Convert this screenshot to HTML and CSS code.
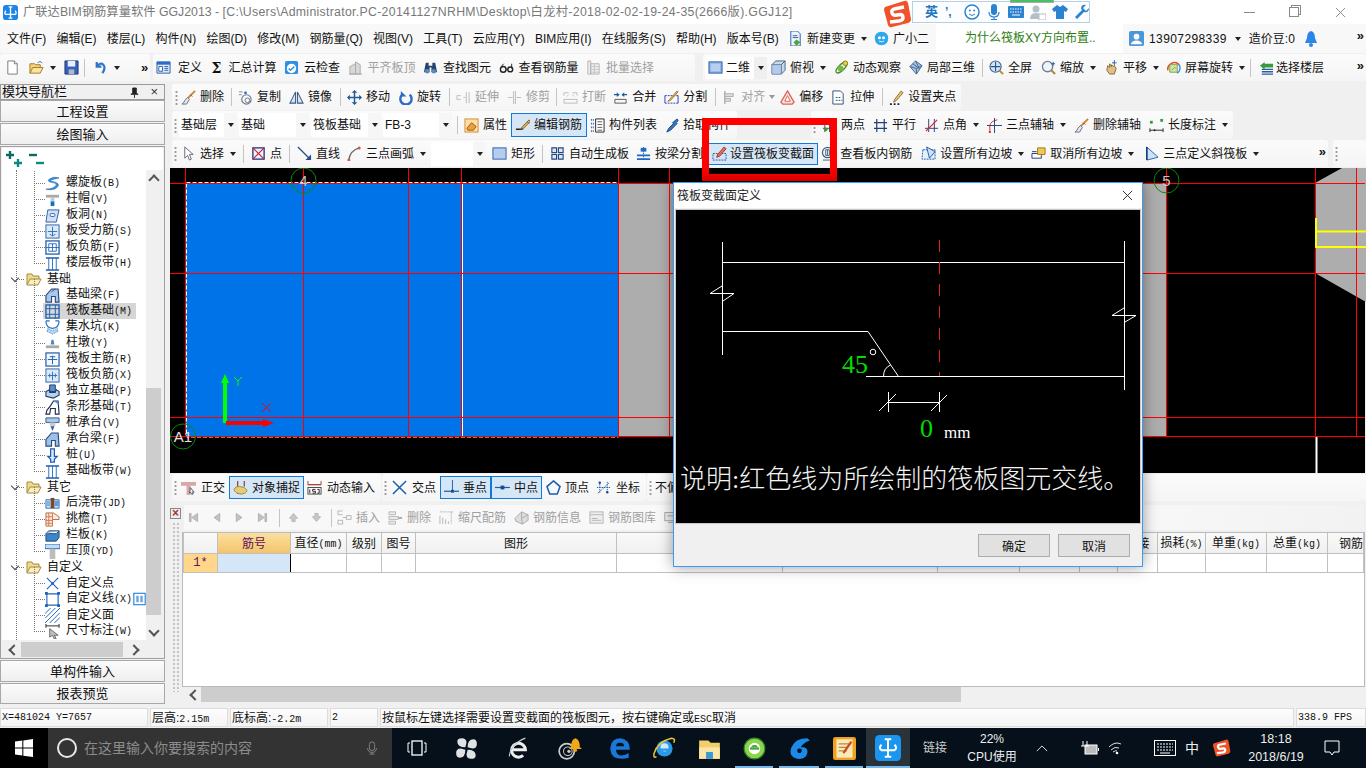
FILE: index.html
```html
<!DOCTYPE html>
<html lang="zh-CN">
<head>
<meta charset="utf-8">
<title>广联达BIM钢筋算量软件 GGJ2013</title>
<link rel="stylesheet" href="styles.css">
</head>
<body>
<svg class="defs" aria-hidden="true">
<!-- file toolbar -->
<symbol id="new" viewBox="0 0 16 16"><path d="M3 1h7l3 3v11H3z" fill="#fff" stroke="#777"/><path d="M10 1v3h3" fill="#eee" stroke="#777"/></symbol>
<symbol id="open" viewBox="0 0 16 16"><path d="M1 14V4h5l1 1h5v3" fill="#f3d27a" stroke="#a07a20"/><path d="M1 14l3-6h11l-3 6z" fill="#f8e3a0" stroke="#a07a20"/><path d="M9 3q3-3 5 0" fill="none" stroke="#3a78c8"/></symbol>
<symbol id="save" viewBox="0 0 16 16"><path d="M1 1h14v14H1z" fill="#3a5fb8" stroke="#1f3578"/><path d="M4 1h8v6H4z" fill="#e8eefc"/><path d="M5 10h6v5H5z" fill="#aeb8cc"/></symbol>
<symbol id="undo" viewBox="0 0 16 16"><path d="M4 2v5h5M4 7q4-5 7-2t-1 9" fill="none" stroke="#2f78c8" stroke-width="2.4"/></symbol>
<symbol id="def" viewBox="0 0 16 16"><path d="M1 2h14v12H1z" fill="#dfeafa" stroke="#2a5ea8"/><path d="M1 2h14v3H1z" fill="#2a6ec0"/><path d="M3 7h4v5H3zM9 7h4M9 9h4M9 11h4" fill="#fff" stroke="#2a5ea8"/></symbol>
<symbol id="cloud" viewBox="0 0 16 16"><rect x="1" y="1" width="14" height="14" rx="2" fill="#2e90e0"/><circle cx="8" cy="9" r="5" fill="#fff"/><path d="M5 9l2 2 4-4" fill="none" stroke="#2e90e0" stroke-width="1.6"/></symbol>
<symbol id="level" viewBox="0 0 16 16"><path d="M2 15V7l6-3v11zM8 15V2l5 3v10z" fill="#d8d8d8" stroke="#aaa"/><path d="M1 15h14" stroke="#aaa"/></symbol>
<symbol id="find" viewBox="0 0 16 16"><path d="M3 3h3v3h4V3h3l2 10H9V8H7v5H1z" fill="#24446e"/><circle cx="4.5" cy="12" r="2.4" fill="#5a8ac0"/><circle cx="11.5" cy="12" r="2.4" fill="#5a8ac0"/></symbol>
<symbol id="glass" viewBox="0 0 16 16"><circle cx="4.5" cy="10" r="3" fill="none" stroke="#222" stroke-width="1.5"/><circle cx="12" cy="10" r="2.6" fill="none" stroke="#222" stroke-width="1.5"/><path d="M3 8q0-3 2-4M13.500 9V4M7.500 10h2" stroke="#222" fill="none"/></symbol>
<symbol id="batch" viewBox="0 0 16 16"><path d="M2 1h3v14H2zM5 4h9v11H5z" fill="#eee" stroke="#b4b4b4"/><path d="M5 7h9M5 10h9M5 13h9M9 4v11" stroke="#c4c4c4"/></symbol>
<symbol id="d2" viewBox="0 0 16 16"><rect x="1" y="2" width="14" height="12" fill="#8fb2e4" stroke="#2a5ea8"/><rect x="3" y="4" width="10" height="8" fill="#b8d0f0"/></symbol>
<symbol id="top" viewBox="0 0 16 16"><path d="M1 5l4-4h10v10l-4 4H1z" fill="#c8d8ec" stroke="#47607e"/><path d="M1 5h10v10M11 5l4-4" fill="none" stroke="#47607e"/><path d="M1 5h10v10H1z" fill="#a8c6ea" opacity=".7"/></symbol>
<symbol id="orbit" viewBox="0 0 16 16"><ellipse cx="8" cy="8" rx="7.500" ry="3" transform="rotate(-45 8 8)" fill="none" stroke="#3f8c2f" stroke-width="1.400"/><circle cx="12" cy="3.500" r="2.500" fill="#e8d23a" stroke="#8a7a10"/><circle cx="7" cy="9" r="3.200" fill="#74b83e"/></symbol>
<symbol id="local" viewBox="0 0 16 16"><path d="M2 7l6-6 7 5-6 9z" fill="#a4c2e6" stroke="#46658a"/><path d="M5 4l7 5M8 1l4 8M2 7l7 2 6-3M9 9v6" stroke="#46658a" fill="none"/></symbol>
<symbol id="full" viewBox="0 0 16 16"><circle cx="7" cy="7" r="6" fill="#d3e4f6" stroke="#45638c" stroke-width="1.200"/><path d="M7 2v10M2 7h10" stroke="#24558f" stroke-width="1.200"/><path d="M11 11l4 4" stroke="#b08a40" stroke-width="2"/></symbol>
<symbol id="zoom" viewBox="0 0 16 16"><circle cx="7" cy="7" r="5.500" fill="#eef4fa" stroke="#6d7f92" stroke-width="1.400"/><path d="M11 11l4 4" stroke="#b08a40" stroke-width="2.200"/><path d="M13 2v4M11 4h4" stroke="#1f5ea8"/></symbol>
<symbol id="pan" viewBox="0 0 16 16"><path d="M3 11l1-5 2 2V4l2 3V5l2 2 1-1 2 3-2 6H6z" fill="#dcc08a" stroke="#8a6a30"/><path d="M11 0v6M8.500 3h5" stroke="#2a5ea8"/></symbol>
<symbol id="spin" viewBox="0 0 16 16"><path d="M2 11A7 7 0 0 1 14 5" fill="none" stroke="#e04a2a" stroke-width="1.600"/><path d="M14 5a7 7 0 0 1-2 9" fill="none" stroke="#2e90e0" stroke-width="1.600"/><path d="M4 5h8v8H4z" fill="#cde8b0" stroke="#78a040"/><path d="M6 11l3-3 2 1" stroke="#d08a20" fill="none"/></symbol>
<symbol id="floor" viewBox="0 0 16 16"><path d="M1 6l5-4v2h9v4H6v2z" fill="#3b9a3b"/><path d="M3 10h12M3 12.500h12M3 15h12" stroke="#2a5ea8" stroke-width="1.400"/></symbol>
<!-- modify toolbar -->
<symbol id="brush" viewBox="0 0 16 16"><path d="M15 1L7 9" stroke="#c88a30" stroke-width="2"/><path d="M7 8l2 2-3 5H1q3-2 3-4z" fill="#dfe4ee" stroke="#6a6f88"/><path d="M10 5l2 2" stroke="#d22"/></symbol>
<symbol id="copy" viewBox="0 0 16 16"><circle cx="9" cy="10" r="5" fill="none" stroke="#6a7788" stroke-width="1.200"/><circle cx="10" cy="11" r="2.500" fill="none" stroke="#6a7788"/><path d="M1 2h4M1 5h3" stroke="#888"/><circle cx="8" cy="3" r="1.500" fill="#2a6ec0"/></symbol>
<symbol id="mirror" viewBox="0 0 16 16"><path d="M7 2v12H1zM9 2v12h6z" fill="#d7e4f4" stroke="#3b5a84" stroke-width="1.100"/></symbol>
<symbol id="move" viewBox="0 0 16 16"><path d="M8 1v14M1 8h14" stroke="#245a94" stroke-width="1.600"/><path d="M8 0l3 3H5zM8 16l3-3H5zM0 8l3-3v6zM16 8l-3-3v6z" fill="#245a94"/></symbol>
<symbol id="rot" viewBox="0 0 16 16"><path d="M12.500 5a6 6 0 1 1-8 0" fill="none" stroke="#2b6cc4" stroke-width="2.600"/><path d="M3 1v6h6" fill="#2b6cc4"/></symbol>
<symbol id="extend" viewBox="0 0 16 16"><path d="M1 6h4M1 10h4M1 6v4M8 8h2M14 2v12M11 2v12" stroke="#bbb" fill="none"/></symbol>
<symbol id="trim" viewBox="0 0 16 16"><path d="M1 8h5M10 8h5M7 1v14M9 1v14" stroke="#bbb" fill="none"/></symbol>
<symbol id="break" viewBox="0 0 16 16"><path d="M1 3h5M10 3h5M1 3v3M15 3v3M1 10h14v4H1z" stroke="#bbb" fill="none"/><path d="M4 7l2-2M12 7l-2-2" stroke="#bbb"/></symbol>
<symbol id="merge" viewBox="0 0 16 16"><path d="M2 10h12v4H2z" fill="none" stroke="#555"/><path d="M1 5h5M15 5h-5" stroke="#1a5ea8" stroke-width="1.400"/><path d="M7 5L4 2.500v5zM9 5l3-2.500v5z" fill="#1a5ea8"/></symbol>
<symbol id="split" viewBox="0 0 16 16"><path d="M1 6h14M1 14h14" stroke="#2040c8" stroke-dasharray="2 1"/><path d="M1 6v8M15 6v8" stroke="#2040c8"/><path d="M14 1L6 10l-2 2 3-1 8-9z" fill="#e8c870" stroke="#a07020"/></symbol>
<symbol id="align" viewBox="0 0 16 16"><path d="M3 1v14" stroke="#aaa" stroke-width="1.400"/><path d="M3 4h9v3H3zM3 9h6v3H3z" fill="#ddd" stroke="#aaa"/></symbol>
<symbol id="offset" viewBox="0 0 16 16"><path d="M8 1l7 12-2 2H3l-2-2z" fill="#fbe0dd" stroke="#d8645a" stroke-width="1.400"/><path d="M8 6l3 6H5z" fill="#fff" stroke="#d8645a"/></symbol>
<symbol id="stretch" viewBox="0 0 16 16"><path d="M2 1h8l3 3v11H2z" fill="#fff" stroke="#2c4c78"/><path d="M5 8h5M5 11h7" stroke="#2c4c78" stroke-dasharray="2 1"/></symbol>
<symbol id="grip2" viewBox="0 0 16 16"><path d="M13 1L6 10l-1 3 3-2 7-8z" fill="#e8c870" stroke="#8a6a30"/><path d="M1 15h2M5 15h2M9 15h2" stroke="#222" stroke-width="2"/></symbol>
<!-- element toolbar -->
<symbol id="prop" viewBox="0 0 16 16"><rect x="1" y="1" width="14" height="14" fill="#fce0a8" stroke="#d88a30"/><path d="M3 11l5-6 5 4-3 4H4z" fill="#e8a040" stroke="#a05a10"/></symbol>
<symbol id="edit" viewBox="0 0 16 16"><path d="M1 12h6l2-1" fill="none" stroke="#222" stroke-width="1.400"/><path d="M15 2L8 9l-2 3 3-1 7-7z" fill="#e8b850" stroke="#8a5a20"/><path d="M13 4l2 2" stroke="#d33"/></symbol>
<symbol id="list" viewBox="0 0 16 16"><path d="M1 2h3M1 6h3M1 10h3M1 14h3" stroke="#2a5ea8" stroke-width="2" stroke-dasharray="1 1"/><path d="M6 1h9v14H6z" fill="#fff" stroke="#222"/><path d="M8 4h5M8 7h5M8 10h5M8 13h5" stroke="#555"/></symbol>
<symbol id="pick" viewBox="0 0 16 16"><path d="M14 1l1 2-2 2 1 1-2 2-5 5-4 2 2-4 5-5-1-1z" fill="#3678c0" stroke="#1e4a80"/></symbol>
<symbol id="twopt" viewBox="0 0 16 16"><path d="M3 1v14M8 1v14M13 1v14M1 11h14" stroke="#445" /><circle cx="4" cy="12" r="2" fill="#3c9a3c"/></symbol>
<symbol id="para" viewBox="0 0 16 16"><path d="M4 1v14M12 1v14M1 5h14M1 11h14" stroke="#22407a" stroke-width="1.300"/></symbol>
<symbol id="ang" viewBox="0 0 16 16"><path d="M5 1v14M11 1v14" stroke="#22407a"/><path d="M1 11h14" stroke="#22407a"/><path d="M2 14L14 2" stroke="#e0222a" stroke-width="1.400"/></symbol>
<symbol id="arc3" viewBox="0 0 16 16"><path d="M3 15V8q1-5 8-6" fill="none" stroke="#d23"/><path d="M0 8h16M8 0v16" stroke="#22407a"/><circle cx="3" cy="15" r="1.200" fill="#d23"/></symbol>
<symbol id="ruler" viewBox="0 0 16 16"><path d="M1 13h14M1 11v4M15 11v4" stroke="#222"/><rect x="1" y="3" width="3" height="3" fill="#3c9a3c"/><rect x="12" y="1" width="3" height="3" fill="#3c9a3c"/><circle cx="6" cy="13" r="1" fill="#222"/></symbol>
<!-- draw toolbar -->
<symbol id="arrow" viewBox="0 0 16 16"><path d="M4 1v12l3-3 2 5 2-1-2-5h4z" fill="#fff" stroke="#667"/></symbol>
<symbol id="point" viewBox="0 0 16 16"><rect x="2" y="2" width="12" height="12" fill="#eef" stroke="#223a7a" stroke-width="1.400"/><path d="M2 2l12 12M14 2L2 14" stroke="#c22" stroke-width="1.200"/></symbol>
<symbol id="line" viewBox="0 0 16 16"><path d="M1 1l12 12" stroke="#234e84" stroke-width="1.400"/><path d="M15 15H9l6-6z" fill="#234e84"/></symbol>
<symbol id="arc" viewBox="0 0 16 16"><path d="M2 15Q3 5 13 2" fill="none" stroke="#6a6a6a" stroke-width="1.400"/><circle cx="2" cy="15" r="1.600" fill="#d8563a"/><circle cx="13" cy="2" r="1.600" fill="#d8563a"/></symbol>
<symbol id="rect" viewBox="0 0 16 16"><rect x="1" y="2" width="14" height="12" fill="#b4cdee" stroke="#2a5ea8"/></symbol>
<symbol id="auto" viewBox="0 0 16 16"><path d="M2 2h5v5H2zM9 2h5v5H9zM2 9h5v5H2zM9 9h5v5H9z" fill="#dbe8f8" stroke="#24487c" stroke-width="1.200"/></symbol>
<symbol id="beam" viewBox="0 0 16 16"><path d="M8 1v14" stroke="#1d6ac0" stroke-dasharray="2 1"/><rect x="5" y="2" width="6" height="4" fill="#1d6ac0"/><path d="M1 9h14v2H1zM1 13h14v2H1z" fill="#1d6ac0"/></symbol>
<symbol id="varsec" viewBox="0 0 16 16"><path d="M1 8h14v7H1z" fill="#d3e4f6" stroke="#2a5ea8" stroke-dasharray="2 1"/><path d="M13 1L6 9l-1 3 3-1 7-8z" fill="#e87058" stroke="#a03020"/></symbol>
<symbol id="view" viewBox="0 0 16 16"><circle cx="7" cy="7" r="5.500" fill="#eef2f8" stroke="#45637c" stroke-width="1.300"/><path d="M5 4h4v6H5zM7 4v6" stroke="#45637c" fill="none"/><path d="M2 15h12" stroke="#45637c"/></symbol>
<symbol id="slope" viewBox="0 0 16 16"><path d="M2 4h13v10H1z" fill="#e8f0fa" stroke="#1a5ea8" stroke-dasharray="2 1"/><path d="M6 1l9 5-6 7z" fill="#cfe0f4" stroke="#1a5ea8"/></symbol>
<symbol id="unslope" viewBox="0 0 16 16"><path d="M1 8h10v5H1z" fill="#fff" stroke="#223a7a"/><path d="M7 2h8v7H7z" fill="#f2c94c" stroke="#9a7a20"/><path d="M1 6h5" stroke="#223a7a"/></symbol>
<symbol id="slope3" viewBox="0 0 16 16"><path d="M3 1v14l12-3z" fill="#cfe0f8" stroke="#2a5ea8"/><path d="M3 1v14" stroke="#123a7a" stroke-width="1.600"/></symbol>
<!-- snap toolbar -->
<symbol id="ortho" viewBox="0 0 16 16"><path d="M0 2h16v4H10v10H6V6H0z" fill="#d8a8a4"/><path d="M10 8l4 5-2 0 1 2-2 0-1-2-1 1z" fill="#eee" stroke="#556"/></symbol>
<symbol id="snap" viewBox="0 0 16 16"><path d="M5 1v14M12 1v6" stroke="#8a3020" stroke-width="1.200"/><path d="M1 10q2-4 6-3 6 0 8 4-1 4-7 4-6-1-7-5z" fill="#e4cc7a" stroke="#a08a30"/></symbol>
<symbol id="dyn" viewBox="0 0 16 16"><path d="M1 1v4h14V1M1 5h14" stroke="#a04038" fill="none"/><rect x="1" y="8" width="14" height="7" fill="#fff" stroke="#444"/><path d="M3 14V10M6 14h3v-2H6v-2h3M11 14h2v-4h-2" stroke="#222" fill="none"/></symbol>
<symbol id="xpt" viewBox="0 0 16 16"><path d="M1 1l14 14M15 1L1 15" stroke="#1a5ea8" stroke-width="1.600"/></symbol>
<symbol id="perp" viewBox="0 0 16 16"><path d="M9 0v12" stroke="#1a5ea8"/><path d="M0 12h16" stroke="#1a5ea8" stroke-width="1.300"/><rect x="7.500" y="10.500" width="3" height="3" fill="#1a4a88"/></symbol>
<symbol id="midp" viewBox="0 0 16 16"><path d="M0 8h16" stroke="#1a5ea8" stroke-width="1.300"/><rect x="6" y="6" width="4" height="4" fill="#1a4a88"/></symbol>
<symbol id="vert" viewBox="0 0 16 16"><path d="M8 1l7 6-3 8H4L1 7z" fill="#f4f8fc" stroke="#1a5ea8" stroke-width="1.600"/></symbol>
<symbol id="coord" viewBox="0 0 16 16"><path d="M4 2v12M12 2v12M1 8h14" stroke="#1a5ea8" stroke-dasharray="1.500 1"/><path d="M2 14L14 3" stroke="#1a5ea8" stroke-dasharray="1.500 1"/><circle cx="4" cy="3" r="1.300" fill="#1a4a88"/><circle cx="12" cy="13" r="1.300" fill="#1a4a88"/></symbol>
<!-- grid toolbar -->
<symbol id="gfirst" viewBox="0 0 16 16"><path d="M3 3h2v10H3zM13 3v10L6 8z" fill="#c2c2c2" stroke="#ababab"/></symbol>
<symbol id="gprev" viewBox="0 0 16 16"><path d="M12 3v10L5 8z" fill="#c2c2c2" stroke="#ababab"/></symbol>
<symbol id="gnext" viewBox="0 0 16 16"><path d="M4 3v10l7-5z" fill="#c2c2c2" stroke="#ababab"/></symbol>
<symbol id="glast" viewBox="0 0 16 16"><path d="M11 3h2v10h-2zM3 3v10l7-5z" fill="#c2c2c2" stroke="#ababab"/></symbol>
<symbol id="gup" viewBox="0 0 16 16"><path d="M8 3l5 6h-3v4H6V9H3z" fill="#c8c8c8" stroke="#b0b0b0"/></symbol>
<symbol id="gdown" viewBox="0 0 16 16"><path d="M8 13l5-6h-3V3H6v4H3z" fill="#c8c8c8" stroke="#b0b0b0"/></symbol>
<symbol id="gins" viewBox="0 0 16 16"><path d="M1 1h5M1 1v4h5M1 11h5v4H1zM6 8h4M10 6h5v4h-5z" fill="none" stroke="#b4b4b4"/></symbol>
<symbol id="gdel" viewBox="0 0 16 16"><path d="M1 2h7v3H1zM1 7h10v3H1zM1 12h7v3H1z" fill="#eee" stroke="#b4b4b4"/><path d="M11 8.500h4" stroke="#aaa" stroke-width="2"/></symbol>
<symbol id="gscale" viewBox="0 0 16 16"><path d="M1 15V6M4 15V8M7 15V10M10 15v-3" stroke="#b4b4b4"/><path d="M1 2h14M13 2v13" stroke="#b4b4b4" stroke-dasharray="2 1"/></symbol>
<symbol id="ginfo" viewBox="0 0 16 16"><path d="M1 9l7-7 7 3v6l-6 4-7-3z" fill="#ddd" stroke="#aaa"/><path d="M8 2v7l7-4M8 9l1 6" stroke="#aaa" fill="none"/></symbol>
<symbol id="glib" viewBox="0 0 16 16"><rect x="1" y="2" width="14" height="12" fill="#eee" stroke="#b4b4b4"/><path d="M1 5h14M3 9h6M3 11h10" stroke="#b4b4b4"/></symbol>
<symbol id="gview" viewBox="0 0 16 16"><rect x="1" y="2" width="14" height="10" fill="#eee" stroke="#999"/><path d="M5 14h6M4 6h8" stroke="#999"/></symbol>
<!-- tree -->
<symbol id="folder" viewBox="0 0 16 16"><path d="M1 14V3h5l1 2h6v3" fill="#f2d98c" stroke="#a58a46"/><path d="M1 14l3-6h11l-3 6z" fill="#fbedbc" stroke="#a58a46"/></symbol>
<symbol id="t1" viewBox="0 0 16 16"><path d="M15 2q-6-2-10 1t3 4q6 1 3 4T1 14q8 2 12-2t-4-6q-5-1-2-2t8-2z" fill="#3e8fd8" stroke="#1b64a8" stroke-width=".6"/></symbol>
<symbol id="t2" viewBox="0 0 16 16"><path d="M1 3h14v3H1z" fill="#a9a9a9"/><path d="M6 6h4v4H6z" fill="#bcd"/><path d="M6 10h4v5H6z" fill="#1c6ec0"/></symbol>
<symbol id="t3" viewBox="0 0 16 16"><path d="M3 2h12l-3 13H1z" fill="#cfe0f6" stroke="#2a5ea8"/><rect x="5.500" y="6" width="5" height="3" rx="1" fill="#fff" stroke="#2a5ea8"/></symbol>
<symbol id="t4" viewBox="0 0 16 16"><rect x="1" y="1" width="14" height="14" fill="#dce9f9" stroke="#2a5ea8"/><path d="M3 8h10M8 3v10M5 11q3 3 6 0" stroke="#2a70c0" fill="none"/></symbol>
<symbol id="t5" viewBox="0 0 16 16"><rect x="1" y="1" width="14" height="14" fill="#fff" stroke="#2a5ea8" stroke-width="1.400"/><path d="M1 8h14M8 4v8M4 4h8v8H4z" stroke="#2a70c0" fill="none"/></symbol>
<symbol id="t6" viewBox="0 0 16 16"><path d="M1 2h14M1 15h14" stroke="#1c5eb0" stroke-width="1.600"/><path d="M4 2v13M8 2v13M12 2v13" stroke="#2a70c0"/></symbol>
<symbol id="t7" viewBox="0 0 16 16"><path d="M1 15V8l6-7h7l1 14H11V9H7v6z" fill="#a9c8ee" stroke="#2a4a78" stroke-width="1.200"/><path d="M7 4l4-3" stroke="#2a4a78"/></symbol>
<symbol id="t8" viewBox="0 0 16 16"><rect x="1" y="1" width="14" height="14" fill="none" stroke="#1c5eb0" stroke-width="1.400"/><path d="M5 1v14M11 1v14M1 5h14M1 11h14" stroke="#1c5eb0"/></symbol>
<symbol id="t9" viewBox="0 0 16 16"><path d="M1 1q0 7 7 8 7-1 7-8M1 1h4M11 1h4" fill="none" stroke="#2a70c0" stroke-width="1.300"/><path d="M3 9q5 4 10 0l1 3-6 3-6-3z" fill="#bcd6f2" stroke-dasharray="1 1" stroke="#2a70c0"/></symbol>
<symbol id="t10" viewBox="0 0 16 16"><path d="M6 9l1-5h2l1 5z" fill="#4a84c4"/><path d="M1 10h14v3H1z" fill="#a9a9a9"/></symbol>
<symbol id="t11" viewBox="0 0 16 16"><rect x="1" y="1" width="14" height="14" fill="#f2f7fd" stroke="#2a5ea8" stroke-width="1.300"/><path d="M3 8h10M8 4v9M5 5h6" stroke="#1c5eb0" fill="none"/></symbol>
<symbol id="t12" viewBox="0 0 16 16"><rect x="1" y="1" width="14" height="14" fill="#dce9f9" stroke="#2a5ea8"/><path d="M3 8h10M8 4v9M5 6v4M11 6v4" stroke="#2a70c0" fill="none"/></symbol>
<symbol id="t13" viewBox="0 0 16 16"><path d="M1 8l4-2v3l6 0 1-3 3 2v4l-6 3-8-2z" fill="#b8d0ee" stroke="#1d3e6e" stroke-width="1.200"/><path d="M5 1h6v7H5z" fill="#5f8fc4" stroke="#1d3e6e"/></symbol>
<symbol id="t14" viewBox="0 0 16 16"><path d="M1 15l1-4 4-5 3-5h5l1 14h-4V9H6l-1 6z" fill="#fff" stroke="#222c4a" stroke-width="1.200"/><path d="M9 1l5 0 1 4z" fill="#5a8ac8"/></symbol>
<symbol id="t15" viewBox="0 0 16 16"><path d="M1 2h14v5H1z" fill="#a8c8ec" stroke="#3a5a88"/><path d="M5 7h6v4H5z" fill="#ccc"/><path d="M6 11h4l-2 5z" fill="#1c5eb0"/></symbol>
<symbol id="t16" viewBox="0 0 16 16"><path d="M1 15V8l6-7h7l1 14h-4V9H7v6z" fill="#9cc0ea" stroke="#2a4a78" stroke-width="1.200"/></symbol>
<symbol id="t17" viewBox="0 0 16 16"><path d="M6 1h4v8h3l-3 3v3H6v-3L3 9h3z" fill="#dbe8f8" stroke="#1c5eb0" stroke-width="1.300"/></symbol>
<symbol id="t18" viewBox="0 0 16 16"><path d="M1 4h14v9H1z" fill="#dbe8f8" stroke="#2a70c0"/><path d="M6 2h4v11H6z" fill="#7a4a20"/><path d="M1 6q3-2 5 0v5H1z" fill="#8ab0e0"/><path d="M10 5h5v5q-3 2-5 0z" fill="#6a98d8"/></symbol>
<symbol id="t19" viewBox="0 0 16 16"><path d="M1 1h8l6 4v3H8v7H1z" fill="#f8e8e0" stroke="#b86a3a"/><path d="M1 5h7M1 9h7M1 12h7M4 1v14M8 1v14" stroke="#d07a4a"/></symbol>
<symbol id="t20" viewBox="0 0 16 16"><path d="M1 6h11l3-3v7l-3 4H1z" fill="#3f85c8" stroke="#1b4a80"/><path d="M1 6l3-3h11" fill="#a8ccee" stroke="#1b4a80"/></symbol>
<symbol id="t21" viewBox="0 0 16 16"><rect x="0" y="0" width="16" height="5" fill="#c6dbf5" stroke="#1c64b8"/><rect x="5" y="5" width="6" height="11" fill="#bdbdbd"/></symbol>
<symbol id="t22" viewBox="0 0 16 16"><path d="M2 2l12 12M14 2L2 14" stroke="#1c64b8" stroke-width="1.200"/><circle cx="8" cy="8" r="1.400" fill="#1c64b8"/></symbol>
<symbol id="t23" viewBox="0 0 16 16"><path d="M2 2h12v12H2z" fill="none" stroke="#1c64b8" stroke-width="1.200"/><path d="M0 0h3v3H0zM13 0h3v3h-3zM0 13h3v3H0zM13 13h3v3h-3z" fill="#1c64b8"/></symbol>
<symbol id="t24" viewBox="0 0 16 16"><path d="M0 6l6-6M0 11L11 0M0 16L16 0M5 16L16 5M10 16l6-6" stroke="#1c64b8"/></symbol>
<symbol id="t25" viewBox="0 0 16 16"><path d="M1 2h14M1 0v4M15 0v4" stroke="#222"/><path d="M5 5l9 7-4 0 2 4-2 0-2-4-3 2z" fill="#c0c0c0" stroke="#666"/></symbol>
<symbol id="t26" viewBox="0 0 16 16"><rect x="1" y="1" width="14" height="14" fill="#fff" stroke="#2a80d8" stroke-width="1.400"/><path d="M4 4h3v8H4zM9 4h3v8H9z" fill="#6ba6e4"/></symbol>
<!-- taskbar -->
<symbol id="win" viewBox="0 0 16 16"><path d="M0 2.300l6.500-.9v6.200H0zM7.400 1.300L16 0v7.600H7.400zM0 8.500h6.500v6.200L0 13.800zM7.400 8.500H16V16l-8.600-1.200z" fill="#fff"/></symbol>
<symbol id="mic" viewBox="0 0 16 16"><rect x="5" y="1" width="6" height="10" rx="3" fill="none" stroke="#888"/><path d="M3 8q0 5 5 5t5-5M8 13v2M5 15h6" fill="none" stroke="#888"/></symbol>
<symbol id="taskv" viewBox="0 0 20 16"><rect x="5" y="1" width="10" height="14" fill="none" stroke="#fff" stroke-width="1.300"/><path d="M3 3H1v9h2M17 3h2v9h-2" fill="none" stroke="#fff"/></symbol>
<symbol id="fan" viewBox="0 0 20 20"><path d="M9 9Q2 9 2 4q0-3 4-3 4 0 4 4zM11 9q0-7 5-7 3 0 3 4 0 4-4 4zM11 11q7 0 7 5 0 3-4 3-4 0-4-4zM9 11q0 7-5 7-3 0-3-4 0-4 4-4z" fill="#dfe3e6"/></symbol>
<symbol id="ebw" viewBox="0 0 20 20"><path d="M4 11h12a6 6 0 1 0-2 5" fill="none" stroke="#eee" stroke-width="2.600"/><path d="M2 17Q3 6 16 1" fill="none" stroke="#ccc"/></symbol>
<symbol id="spiral" viewBox="0 0 24 24"><circle cx="9" cy="15" r="7" fill="none" stroke="#ccc" stroke-width="1.600"/><circle cx="10" cy="15" r="4" fill="none" stroke="#bbb"/><circle cx="11" cy="15" r="1.500" fill="#ccc"/><path d="M13 11q0-7 4-8 4 1 4 8l2 2H11z" fill="#f0a818"/><circle cx="17" cy="14" r="1.500" fill="#f0a818"/></symbol>
<symbol id="edge" viewBox="0 0 20 20"><path d="M2 9q1-8 9-8 8 1 8 10H7q0 5 5 5 3 0 6-2v4q-3 1-6 1-9 0-10-8 0-5 5-7-2 2-2 5z" fill="#1a78d8"/><path d="M7 8h7q0-3-3.500-3T7 8z" fill="#04101a"/></symbol>
<symbol id="ie" viewBox="0 0 20 20"><circle cx="10" cy="10" r="7" fill="#2a9ae8"/><circle cx="10" cy="9" r="3.500" fill="#cfe8fa"/><path d="M6 10h10v2H6z" fill="#2a9ae8"/><path d="M3 17Q0 19 1 14 4 4 16 1q4 0 2 4" fill="none" stroke="#e8c838" stroke-width="1.300"/></symbol>
<symbol id="tfolder" viewBox="0 0 20 20"><path d="M1 3h8l2 2h8v14H1z" fill="#f2cf6a"/><path d="M1 9h18v10H1z" fill="#fbe6a6"/><path d="M7 13h6v6H7z" fill="#3a9ad8"/></symbol>
<symbol id="gie" viewBox="0 0 20 20"><circle cx="10" cy="10" r="9" fill="#8ed44a" stroke="#2e8a30"/><circle cx="10" cy="10" r="5" fill="#fff"/><path d="M6 9h8v2H6z" fill="#3ea83e"/><path d="M10 7a3 3 0 0 1 3 2H7a3 3 0 0 1 3-2z" fill="#3ea83e"/></symbol>
<symbol id="gapp" viewBox="0 0 20 20"><path d="M17 1Q6 1 3 9t5 10q8 1 9-6 0-5-6-4 2-4 8-6-1-1-2-2z" fill="#1c8ae8"/><path d="M8 11q2-2 4 0 0 3-2 3t-2-3z" fill="#04101a"/></symbol>
<symbol id="note" viewBox="0 0 20 20"><rect x="0" y="0" width="20" height="20" rx="2" fill="#f2a020"/><rect x="3" y="2" width="14" height="16" fill="#fce9b8"/><path d="M5 6h10M5 9h8M5 12h7" stroke="#b84"/><path d="M16 4l-7 10" stroke="#d04a20" stroke-width="2"/></symbol>
<symbol id="app" viewBox="0 0 24 24"><rect width="24" height="24" rx="4" fill="#1b96f0"/><path d="M12 4v16M6 9q-3 3 0 5h12q3-2 0-5M9 4h6M9 20h6" fill="none" stroke="#fff" stroke-width="1.800"/></symbol>
<symbol id="up" viewBox="0 0 14 8"><path d="M1 7l6-6 6 6" fill="none" stroke="#fff"/></symbol>
<symbol id="batt" viewBox="0 0 18 16"><rect x="4" y="5" width="12" height="9" fill="#bbb" stroke="#fff"/><path d="M2 1v5M6 1v5M0 6h8" stroke="#fff"/><rect x="17" y="8" width="1" height="3" fill="#fff"/></symbol>
<symbol id="wifi" viewBox="0 0 14 14"><path d="M1 6q6-6 12-3M3 9q4-4 8-2M5 11q3-2 4-1" fill="none" stroke="#ddd"/><circle cx="9" cy="12" r="1.300" fill="#fff"/></symbol>
<symbol id="kbd" viewBox="0 0 22 16"><rect x=".5" y=".5" width="21" height="15" fill="none" stroke="#fff"/><path d="M3 4h16M3 7h16M3 10h16" stroke="#fff" stroke-dasharray="2 1"/><path d="M6 13h10" stroke="#fff"/></symbol>
<symbol id="sogou" viewBox="0 0 28 28"><path d="M1 7L20 1q3-1 4 2l3 16q0 3-3 4L8 27q-3 1-4-2L0 10q0-2 1-3z" fill="#f0522a"/><path d="M20 7L10 9q-3 1-2 4t5 2l3-.5q3 0 3 3t-4 3.500L6 22" fill="none" stroke="#fff" stroke-width="3.400"/></symbol>
<symbol id="notif" viewBox="0 0 16 16"><path d="M1 1h14v11h-5l-2 3-2-3H1z" fill="none" stroke="#fff"/></symbol>
<!-- ime + misc -->
<symbol id="smile" viewBox="0 0 16 16"><circle cx="8" cy="8" r="7" fill="#fff" stroke="#2a82d0" stroke-width="1.500"/><circle cx="5.800" cy="6.500" r="1" fill="#2a82d0"/><circle cx="10.200" cy="6.500" r="1" fill="#2a82d0"/><path d="M5 10q3 3 6 0" fill="none" stroke="#2a82d0"/></symbol>
<symbol id="imic" viewBox="0 0 16 16"><rect x="5" y="0" width="6" height="11" rx="3" fill="#2a82d0"/><path d="M3 8q0 5 5 5t5-5M8 13v2M5 15.500h6" fill="none" stroke="#2a82d0" stroke-width="1.200"/></symbol>
<symbol id="ikbd" viewBox="0 0 16 16"><rect y="2" width="16" height="12" rx="1" fill="#2a82d0"/><path d="M2 5h12M2 8h12" stroke="#fff" stroke-dasharray="1.500 1"/><path d="M4 11h8" stroke="#fff"/></symbol>
<symbol id="iuser" viewBox="0 0 16 16"><circle cx="6" cy="5" r="3.500" fill="#b5bfc8"/><path d="M0 15q0-6 6-6 4 0 5 2v4z" fill="#b5bfc8"/><rect x="9" y="10" width="7" height="6" fill="#fff" stroke="#b5bfc8"/></symbol>
<symbol id="shirt" viewBox="0 0 16 16"><path d="M5 1l3 2 3-2 5 4-2 3-2-1v8H4V7L2 8 0 5z" fill="#2a82d0"/></symbol>
<symbol id="wrench" viewBox="0 0 16 16"><path d="M15 4l-3 3-3-3 3-3Q8 0 7 4q0 1 1 2l-7 7 2 2 7-7q5 1 5-4z" fill="#2a82d0"/></symbol>
<symbol id="logo" viewBox="0 0 16 16"><rect width="16" height="16" rx="3" fill="#1b86e8"/><path d="M8 2v12M3 6q-2 3 0 4h10q2-1 0-4M6 2h4M6 14h4" fill="none" stroke="#fff" stroke-width="1.400"/></symbol>
<symbol id="docg" viewBox="0 0 16 16"><path d="M3 0h7l3 3v13H3z" fill="#eef4fc" stroke="#2a5ea8"/><path d="M5 5h5M5 7h6" stroke="#2a5ea8"/><path d="M9 9l4 3-4 4-3-4z" fill="#4aa83a"/></symbol>
<symbol id="gxe" viewBox="0 0 18 18"><path d="M9 1q8 0 8 8t-8 8-8-8 8-8z" fill="#2ea8ec"/><circle cx="6.500" cy="8" r="1.800" fill="#fff"/><circle cx="11.500" cy="8" r="1.800" fill="#fff"/><path d="M6 12q3 2 6 0" stroke="#fff" fill="none"/></symbol>
<symbol id="uav" viewBox="0 0 16 16"><rect width="16" height="16" rx="2" fill="#4b97d8"/><circle cx="8" cy="6" r="3" fill="#fff"/><path d="M2 14q1-4 6-4t6 4z" fill="#fff"/></symbol>
<symbol id="bell" viewBox="0 0 12 18"><path d="M6 1q4 1 4 7l2 5H0l2-5q0-6 4-7z" fill="#2c86e8"/><circle cx="6" cy="15" r="2" fill="#2c86e8"/></symbol>
<symbol id="pin" viewBox="0 0 10 12"><path d="M3 1h4v6l2 1H1l2-1zM5 8v4" fill="#222" stroke="#222"/></symbol>
<symbol id="plus2" viewBox="0 0 18 18"><path d="M4 1v8M0 5h8" stroke="#0c6a62" stroke-width="2.400"/><path d="M12 9v8M8 13h8" stroke="#0c8a80" stroke-width="2.400"/></symbol>
<symbol id="minus2" viewBox="0 0 18 18"><path d="M1 5h8" stroke="#0c6a62" stroke-width="2.400"/><path d="M8 13h8" stroke="#0c8a80" stroke-width="2.400"/></symbol>
</svg>

<div class="app">
  <header class="titlebar">
    <svg class="tlogo"><use href="#logo"/></svg>
    <span class="ttext">广联达BIM钢筋算量软件 GGJ2013 - <span class="path">[C:\Users\Administrator.PC-20141127NRHM\Desktop\白龙村-2018-02-02-19-24-35(2666版).GGJ12]</span></span>
    <span class="wctl">
      <span class="wmin"></span>
      <span class="wmax"></span>
      <svg class="wclose" viewBox="0 0 12 12"><path d="M1 1l10 10M11 1L1 11" stroke="#8a8a8a" fill="none"/></svg>
    </span>
  </header>

  <nav class="menubar">
    <span class="menus">
      <span>文件(F)</span><span>编辑(E)</span><span>楼层(L)</span><span>构件(N)</span><span>绘图(D)</span><span>修改(M)</span><span>钢筋量(Q)</span><span>视图(V)</span><span>工具(T)</span><span>云应用(Y)</span><span>BIM应用(I)</span><span>在线服务(S)</span><span>帮助(H)</span><span>版本号(B)</span>
    </span>
    <span class="tool tool-new"><svg class="ic"><use href="#docg"/></svg><span>新建变更</span><i class="caret"></i></span>
    <span class="tool tool-gxe"><svg class="ic"><use href="#gxe"/></svg><span>广小二</span></span>
    <span class="news">为什么筏板XY方向布置..</span>
    <span class="acct"><svg class="ic"><use href="#uav"/></svg><span class="phone">13907298339</span><i class="caret"></i><span class="beans">造价豆:0</span><svg class="bell"><use href="#bell"/></svg></span>
    <span class="more more-end">»</span>
  </nav>

  <div class="toolrow r1">
    <div class="grp g11">
      <svg class="ic ic-first"><use href="#new"/></svg>
      <svg class="ic"><use href="#open"/></svg><i class="caret"></i>
      <svg class="ic"><use href="#save"/></svg>
      <b class="sep"></b>
      <svg class="ic"><use href="#undo"/></svg><i class="caret"></i>
      <span class="more">»</span>
    </div>
    <div class="grp g12">
      <span class="tool"><svg class="ic"><use href="#def"/></svg><span>定义</span></span>
      <span class="tool"><span class="sigma">Σ</span><span>汇总计算</span></span>
      <span class="tool"><svg class="ic"><use href="#cloud"/></svg><span>云检查</span></span>
      <span class="tool off"><svg class="ic"><use href="#level"/></svg><span>平齐板顶</span></span>
      <span class="tool"><svg class="ic"><use href="#find"/></svg><span>查找图元</span></span>
      <span class="tool"><svg class="ic"><use href="#glass"/></svg><span>查看钢筋量</span></span>
      <span class="tool off"><svg class="ic"><use href="#batch"/></svg><span>批量选择</span></span>
    </div>
    <div class="grp g13">
      <span class="tool pill"><svg class="ic"><use href="#d2"/></svg><span>二维</span></span><span class="capbox"><i class="caret"></i></span>
      <span class="tool m8"><svg class="ic"><use href="#top"/></svg><span>俯视</span><i class="caret"></i></span>
      <span class="tool"><svg class="ic"><use href="#orbit"/></svg><span>动态观察</span></span>
      <span class="tool"><svg class="ic"><use href="#local"/></svg><span>局部三维</span></span>
      <b class="sep"></b>
      <span class="tool m9"><svg class="ic"><use href="#full"/></svg><span>全屏</span></span>
      <span class="tool m8"><svg class="ic"><use href="#zoom"/></svg><span>缩放</span><i class="caret"></i></span>
      <span class="tool"><svg class="ic"><use href="#pan"/></svg><span>平移</span><i class="caret"></i></span>
      <span class="tool m5"><svg class="ic"><use href="#spin"/></svg><span>屏幕旋转</span><i class="caret"></i></span>
      <b class="sep sep-floor"></b>
      <span class="tool floor"><svg class="ic"><use href="#floor"/></svg><span>选择楼层</span></span>
      <span class="more more-end">»</span>
    </div>
  </div>

  <div class="workspace">
    <aside class="nav">
      <div class="navhead"><span>模块导航栏</span><svg class="pin"><use href="#pin"/></svg><span class="navx">×</span></div>
      <div class="navbtn">工程设置</div>
      <div class="navbtn">绘图输入</div>
      <div class="navframe">
        <div class="treetools"><svg class="tt"><use href="#plus2"/></svg><svg class="tt"><use href="#minus2"/></svg></div>
        <div class="treebody">
          <div class="tree">
            <div class="leaf"><svg class="li"><use href="#t1"/></svg><span>螺旋板<span class="k">(B)</span></span></div>
            <div class="leaf"><svg class="li"><use href="#t2"/></svg><span>柱帽<span class="k">(V)</span></span></div>
            <div class="leaf"><svg class="li"><use href="#t3"/></svg><span>板洞<span class="k">(N)</span></span></div>
            <div class="leaf"><svg class="li"><use href="#t4"/></svg><span>板受力筋<span class="k">(S)</span></span></div>
            <div class="leaf"><svg class="li"><use href="#t5"/></svg><span>板负筋<span class="k">(F)</span></span></div>
            <div class="leaf"><svg class="li"><use href="#t6"/></svg><span>楼层板带<span class="k">(H)</span></span></div>
            <div class="node"><i class="chev"></i><svg class="fo"><use href="#folder"/></svg><span>基础</span></div>
            <div class="leaf"><svg class="li"><use href="#t7"/></svg><span>基础梁<span class="k">(F)</span></span></div>
            <div class="leaf sel"><svg class="li"><use href="#t8"/></svg><span>筏板基础<span class="k">(M)</span></span></div>
            <div class="leaf"><svg class="li"><use href="#t9"/></svg><span>集水坑<span class="k">(K)</span></span></div>
            <div class="leaf"><svg class="li"><use href="#t10"/></svg><span>柱墩<span class="k">(Y)</span></span></div>
            <div class="leaf"><svg class="li"><use href="#t11"/></svg><span>筏板主筋<span class="k">(R)</span></span></div>
            <div class="leaf"><svg class="li"><use href="#t12"/></svg><span>筏板负筋<span class="k">(X)</span></span></div>
            <div class="leaf"><svg class="li"><use href="#t13"/></svg><span>独立基础<span class="k">(P)</span></span></div>
            <div class="leaf"><svg class="li"><use href="#t14"/></svg><span>条形基础<span class="k">(T)</span></span></div>
            <div class="leaf"><svg class="li"><use href="#t15"/></svg><span>桩承台<span class="k">(V)</span></span></div>
            <div class="leaf"><svg class="li"><use href="#t16"/></svg><span>承台梁<span class="k">(F)</span></span></div>
            <div class="leaf"><svg class="li"><use href="#t17"/></svg><span>桩<span class="k">(U)</span></span></div>
            <div class="leaf"><svg class="li"><use href="#t6"/></svg><span>基础板带<span class="k">(W)</span></span></div>
            <div class="node"><i class="chev"></i><svg class="fo"><use href="#folder"/></svg><span>其它</span></div>
            <div class="leaf"><svg class="li"><use href="#t18"/></svg><span>后浇带<span class="k">(JD)</span></span></div>
            <div class="leaf"><svg class="li"><use href="#t19"/></svg><span>挑檐<span class="k">(T)</span></span></div>
            <div class="leaf"><svg class="li"><use href="#t20"/></svg><span>栏板<span class="k">(K)</span></span></div>
            <div class="leaf"><svg class="li"><use href="#t21"/></svg><span>压顶<span class="k">(YD)</span></span></div>
            <div class="node"><i class="chev"></i><svg class="fo"><use href="#folder"/></svg><span>自定义</span></div>
            <div class="leaf"><svg class="li"><use href="#t22"/></svg><span>自定义点</span></div>
            <div class="leaf"><svg class="li"><use href="#t23"/></svg><span>自定义线<span class="k">(X)</span></span><svg class="xi"><use href="#t26"/></svg></div>
            <div class="leaf"><svg class="li"><use href="#t24"/></svg><span>自定义面</span></div>
            <div class="leaf"><svg class="li"><use href="#t25"/></svg><span>尺寸标注<span class="k">(W)</span></span></div>
          </div>
          <div class="vscroll"><i class="sa sa-up"></i><div class="vtrack"><div class="vthumb"></div></div><i class="sa sa-dn"></i></div>
        </div>
        <div class="hscroll"><i class="sa sa-l"></i><div class="htrack"><div class="hthumb"></div></div><i class="sa sa-r"></i></div>
      </div>
      <div class="navbtn nb2">单构件输入</div>
      <div class="navbtn nb3">报表预览</div>
    </aside>

    <main class="main">
      <div class="toolrow r2">
        <div class="grp g21">
          <i class="grip"></i>
          <span class="tool m7"><svg class="ic"><use href="#brush"/></svg><span>删除</span></span><b class="sep"></b>
          <span class="tool"><svg class="ic"><use href="#copy"/></svg><span>复制</span></span>
          <span class="tool"><svg class="ic"><use href="#mirror"/></svg><span>镜像</span></span><b class="sep"></b>
          <span class="tool"><svg class="ic"><use href="#move"/></svg><span>移动</span></span>
          <span class="tool"><svg class="ic"><use href="#rot"/></svg><span>旋转</span></span><b class="sep"></b>
          <span class="tool off"><svg class="ic"><use href="#extend"/></svg><span>延伸</span></span>
          <span class="tool off m6"><svg class="ic"><use href="#trim"/></svg><span>修剪</span></span><b class="sep"></b>
          <span class="tool off m7"><svg class="ic"><use href="#break"/></svg><span>打断</span></span>
          <span class="tool"><svg class="ic"><use href="#merge"/></svg><span>合并</span></span>
          <span class="tool"><svg class="ic"><use href="#split"/></svg><span>分割</span></span><b class="sep"></b>
          <span class="tool off m5"><svg class="ic"><use href="#align"/></svg><span>对齐</span><i class="caret caret-off"></i></span>
          <span class="tool"><svg class="ic"><use href="#offset"/></svg><span>偏移</span></span>
          <span class="tool"><svg class="ic"><use href="#stretch"/></svg><span>拉伸</span></span><b class="sep"></b>
          <span class="tool"><svg class="ic"><use href="#grip2"/></svg><span>设置夹点</span></span>
        </div>
      </div>
      <div class="toolrow r3">
        <div class="grp g31">
          <i class="grip"></i>
          <span class="sel s1"><span>基础层</span><i class="capbox2"><i class="caret"></i></i></span>
          <span class="sel s2"><span>基础</span><i class="capbox2"><i class="caret"></i></i></span>
          <span class="sel s3"><span>筏板基础</span><i class="capbox2"><i class="caret"></i></i></span>
          <span class="sel s4"><span>FB-3</span><i class="capbox2"><i class="caret"></i></i></span>
          <b class="sep sep3"></b>
          <span class="tool m4"><svg class="ic"><use href="#prop"/></svg><span>属性</span></span>
          <span class="tool active m3"><svg class="ic"><use href="#edit"/></svg><span>编辑钢筋</span></span>
          <span class="tool"><svg class="ic"><use href="#list"/></svg><span>构件列表</span></span>
          <span class="tool"><svg class="ic"><use href="#pick"/></svg><span>拾取构件</span></span>
        </div>
        <div class="grp g32">
          <i class="grip"></i>
          <span class="tool"><svg class="ic"><use href="#twopt"/></svg><span>两点</span></span>
          <span class="tool"><svg class="ic"><use href="#para"/></svg><span>平行</span></span>
          <span class="tool"><svg class="ic"><use href="#ang"/></svg><span>点角</span><i class="caret"></i></span>
          <span class="tool"><svg class="ic"><use href="#arc3"/></svg><span>三点辅轴</span><i class="caret"></i></span>
          <span class="tool"><svg class="ic"><use href="#brush"/></svg><span>删除辅轴</span></span>
          <span class="tool"><svg class="ic"><use href="#ruler"/></svg><span>长度标注</span><i class="caret"></i></span>
        </div>
      </div>
      <div class="toolrow r4">
        <div class="grp g41">
          <i class="grip"></i>
          <span class="tool m7"><svg class="ic"><use href="#arrow"/></svg><span>选择</span><i class="caret"></i></span><b class="sep"></b>
          <span class="tool"><svg class="ic"><use href="#point"/></svg><span>点</span></span><b class="sep"></b>
          <span class="tool"><svg class="ic"><use href="#line"/></svg><span>直线</span></span>
          <span class="tool"><svg class="ic"><use href="#arc"/></svg><span>三点画弧</span><i class="caret"></i></span>
          <span class="sel s5"><i class="capbox2"><i class="caret"></i></i></span>
          <span class="tool"><svg class="ic"><use href="#rect"/></svg><span>矩形</span></span><b class="sep"></b>
          <span class="tool"><svg class="ic"><use href="#auto"/></svg><span>自动生成板</span></span>
          <span class="tool"><svg class="ic"><use href="#beam"/></svg><span>按梁分割</span></span>
          <span class="tool active a2"><svg class="ic"><use href="#varsec"/></svg><span>设置筏板变截面</span></span>
          <span class="tool m9"><svg class="ic"><use href="#view"/></svg><span>查看板内钢筋</span></span>
          <span class="tool"><svg class="ic"><use href="#slope"/></svg><span>设置所有边坡</span><i class="caret"></i></span>
          <span class="tool m10"><svg class="ic"><use href="#unslope"/></svg><span>取消所有边坡</span><i class="caret"></i></span>
          <span class="tool"><svg class="ic"><use href="#slope3"/></svg><span>三点定义斜筏板</span><i class="caret"></i></span>
          <span class="more more-end">»</span>
        </div>
        <div class="grp g42"><i class="grip"></i></div>
      </div>

      <div class="canvas">
        <svg class="cad" viewBox="170 168 1196 305">
          <rect x="170" y="168" width="1195" height="305" fill="#000"/>
          <rect x="186" y="183" width="432" height="254" fill="#0073e8"/>
          <rect x="618" y="183" width="548" height="254" fill="#adadad"/>
          <path d="M1315 183l27-15h24v134l-51-29z" fill="#adadad"/>
          <path d="M186.500 182.500H618.500V437H186.500z" fill="none" stroke="#fff" stroke-dasharray="4 2"/>
          <path d="M462.500 183v254" stroke="#fff"/>
          <path d="M170 183.500H1365M170 273.500H1365M170 417.500H1365M170 436.500H1365M185.500 168V437M303.500 168V437M408.500 168V437M461.500 168V437M618.500 168V437M669.500 168V437M1166.500 168V437M1315.500 168V437M1356.500 168V437" stroke="#f00" fill="none"/>
          <path d="M1316 218v30M1316 231.500H1366M1316 247H1366" stroke="#ff0" stroke-width="2" fill="none"/>
          <path d="M1316.500 437v36" stroke="#fff" stroke-width="2"/>
          <circle cx="303.500" cy="180.500" r="12.500" fill="none" stroke="#0a8a0a"/>
          <circle cx="1166.500" cy="180.500" r="12.500" fill="none" stroke="#0a8a0a"/>
          <circle cx="183" cy="436.500" r="12.500" fill="none" stroke="#0a8a0a"/>
          <text class="axis" x="303.500" y="186">4</text>
          <text class="axis" x="1166.500" y="186">5</text>
          <text class="axis ax2" x="183" y="442">A1</text>
          <path d="M225 423V378" stroke="#0f0" stroke-width="4"/><path d="M225 374l4 9h-8z" fill="#0f0"/>
          <path d="M226 423H266" stroke="#f00" stroke-width="4"/><path d="M274 423l-11-4v8z" fill="#f00"/>
          <path d="M234 377l4 4 4-4M238 381v5" stroke="#0f0" fill="none"/>
          <path d="M262 403l9 9M271 403l-9 9" stroke="#f00" fill="none"/>
        </svg>
      </div>

      <div class="toolrow r5">
        <div class="grp g51">
          <i class="grip"></i>
          <span class="tool"><svg class="ic"><use href="#ortho"/></svg><span>正交</span></span>
          <span class="tool active"><svg class="ic"><use href="#snap"/></svg><span>对象捕捉</span></span>
          <span class="tool"><svg class="ic"><use href="#dyn"/></svg><span>动态输入</span></span>
        </div>
        <div class="grp g52">
          <i class="grip"></i>
          <span class="tool"><svg class="ic"><use href="#xpt"/></svg><span>交点</span></span>
          <span class="tool active ab"><svg class="ic"><use href="#perp"/></svg><span>垂点</span></span>
          <span class="tool active ab"><svg class="ic"><use href="#midp"/></svg><span>中点</span></span>
          <span class="tool vt"><svg class="ic"><use href="#vert"/></svg><span>顶点</span></span>
          <span class="tool"><svg class="ic"><use href="#coord"/></svg><span>坐标</span></span>
        </div>
        <div class="grp g53"><i class="grip"></i><span>不偏</span></div>
      </div>

      <div class="gridwrap">
        <div class="strip"><span class="stripx">×</span><i class="gripv"></i></div>
        <div class="gridmain">
          <div class="gridbar">
            <svg class="ic"><use href="#gfirst"/></svg>
            <svg class="ic"><use href="#gprev"/></svg>
            <svg class="ic"><use href="#gnext"/></svg>
            <svg class="ic"><use href="#glast"/></svg>
            <b class="sep sp1"></b>
            <svg class="ic"><use href="#gup"/></svg>
            <svg class="ic"><use href="#gdown"/></svg>
            <b class="sep sp2"></b>
            <span class="tool off"><svg class="ic"><use href="#gins"/></svg><span>插入</span></span>
            <span class="tool off"><svg class="ic"><use href="#gdel"/></svg><span>删除</span></span>
            <span class="tool off"><svg class="ic"><use href="#gscale"/></svg><span>缩尺配筋</span></span>
            <span class="tool off"><svg class="ic"><use href="#ginfo"/></svg><span>钢筋信息</span></span>
            <span class="tool off"><svg class="ic"><use href="#glib"/></svg><span>钢筋图库</span></span>
            <svg class="ic"><use href="#gview"/></svg>
          </div>
          <div class="tablebox">
            <table class="rebar">
              <colgroup>
                <col class="c34"><col class="c73"><col class="c56"><col class="c35"><col class="c34"><col class="c201"><col class="c166"><col class="c155"><col class="c82"><col class="c60"><col class="c38"><col class="c40"><col class="c48"><col class="c61"><col class="c61"><col class="c36">
              </colgroup>
              <tr><th></th><th class="hot">筋号</th><th>直径<span class="k">(mm)</span></th><th>级别</th><th>图号</th><th>图形</th><th>计算公式</th><th>公式描述</th><th>长度</th><th>根数</th><th></th><th>搭接</th><th>损耗<span class="k">(%)</span></th><th>单重<span class="k">(kg)</span></th><th>总重<span class="k">(kg)</span></th><th class="clip">钢筋</th></tr>
              <tr><td class="rowhead">1*</td><td class="cur"></td><td></td><td></td><td></td><td></td><td></td><td></td><td></td><td></td><td></td><td></td><td></td><td></td><td></td><td></td></tr>
            </table>
          </div>
          <div class="gscroll"><i class="sa sa-l"></i><div class="gthumb"></div></div>
        </div>
      </div>
    </main>
  </div>

  <footer class="status">
    <span class="cell c1 k">X=481024 Y=7657</span>
    <span class="cell c2">层高:<span class="k">2.15m</span></span>
    <span class="cell c3">底标高:<span class="k">-2.2m</span></span>
    <span class="cell c4 k">2</span>
    <span class="cell c5">按鼠标左键选择需要设置变截面的筏板图元，按右键确定或<span class="k">ESC</span>取消</span>
    <span class="cell c6 k">338.9 FPS</span>
  </footer>

  <div class="taskbar">
    <div class="start"><svg class="winlogo"><use href="#win"/></svg></div>
    <div class="search"><i class="cortana"></i><span class="hint">在这里输入你要搜索的内容</span><svg class="smic"><use href="#mic"/></svg></div>
    <div class="tasks">
      <span class="slot"><svg class="tv"><use href="#taskv"/></svg></span>
      <span class="slot"><svg class="ti"><use href="#fan"/></svg></span>
      <span class="slot"><svg class="ti"><use href="#ebw"/></svg></span>
      <span class="slot"><svg class="ti2"><use href="#spiral"/></svg></span>
      <span class="slot"><svg class="ti"><use href="#edge"/></svg></span>
      <span class="slot"><svg class="ti"><use href="#ie"/></svg></span>
      <span class="slot"><svg class="ti"><use href="#tfolder"/></svg></span>
      <span class="slot run"><svg class="ti"><use href="#gie"/></svg></span>
      <span class="slot run"><svg class="ti"><use href="#gapp"/></svg></span>
      <span class="slot run"><svg class="ti"><use href="#note"/></svg></span>
      <span class="slot run cur"><svg class="ti2"><use href="#app"/></svg></span>
    </div>
    <div class="tray">
      <span class="tlink">链接</span>
      <span class="cpu"><span>22%</span><span>CPU使用</span></span>
      <svg class="tup"><use href="#up"/></svg>
      <svg class="tbat"><use href="#batt"/></svg>
      <svg class="twifi"><use href="#wifi"/></svg>
      <svg class="tkbd"><use href="#kbd"/></svg>
      <span class="tzh">中</span>
      <svg class="tsg"><use href="#sogou"/></svg>
      <span class="clock"><span>18:18</span><span>2018/6/19</span></span>
      <svg class="tnote"><use href="#notif"/></svg>
    </div>
  </div>

  <div class="imebar">
    <svg class="imelogo"><use href="#sogou"/></svg>
    <div class="imetools">
      <span class="imeying">英</span><span class="imepunc">’,</span>
      <svg class="im"><use href="#smile"/></svg>
      <svg class="im"><use href="#imic"/></svg>
      <svg class="im"><use href="#ikbd"/></svg>
      <svg class="im"><use href="#iuser"/></svg>
      <svg class="im"><use href="#shirt"/></svg>
      <svg class="im"><use href="#wrench"/></svg>
    </div>
  </div>
  <div class="toptab"></div>

  <div class="redbox"></div>

  <section class="dialog">
    <div class="dlghead"><span>筏板变截面定义</span><svg class="dlgx" viewBox="0 0 12 12"><path d="M1 1l10 10M11 1L1 11" stroke="#222" fill="none"/></svg></div>
    <svg class="dlgart" viewBox="0 0 464 313">
      <path d="M46.500 32v113M448.500 31v149M46.500 52.500H448M46.500 121.500H192L222.500 166.500M190 166.500H448M34 83.500H58M34 83.500L46 76M58 83.500L47 91M436 105.500H460M436 105.500L448 98M460 105.500L449 112M212.500 182v20M263.500 182v20M212.500 192.500H263M203 201L220 184M255 201L271 185M207.500 166.500Q207.500 158 214.500 155" stroke="#fff" fill="none"/>
      <path d="M263.500 30V166" stroke="#d22" stroke-dasharray="12 10" fill="none"/>
      <circle cx="197" cy="142" r="2.800" fill="none" stroke="#fff"/>
      <text class="gval" x="166" y="163">45</text>
      <text class="gval" x="244" y="227">0</text>
      <text class="unit" x="268" y="228">mm</text>
      <text class="note" x="4" y="278">说明:红色线为所绘制的筏板图元交线。</text>
    </svg>
    <div class="dlgfoot"><button class="btn">确定</button><button class="btn">取消</button></div>
  </section>
</div>
</body>
</html>
```
FILE: styles.css
```css
* { box-sizing: border-box; }
html, body { margin: 0; padding: 0; }
body {
  width: 1366px; height: 768px; overflow: hidden;
  font: 12px/16px "Liberation Sans", "Noto Sans CJK SC", sans-serif;
  color: #111; background: #f0f0f0;
}
.defs { position: absolute; width: 0; height: 0; }
svg { display: block; flex: none; }
i, b { display: block; font-style: normal; }
.app { position: relative; width: 1366px; height: 768px; display: flex; flex-direction: column; overflow: hidden; }

/* title */
.titlebar { height: 24px; background: #fff; display: flex; align-items: center; padding-left: 3px; flex: none; }
.tlogo { width: 15px; height: 15px; }
.ttext { margin-left: 5px; color: #787878; font-size: 12.300px; white-space: nowrap; }
.path { letter-spacing: .3px; }
.wctl { margin-left: auto; display: flex; align-items: center; }
.wmin { width: 11px; height: 1px; background: #8a8a8a; margin-right: 34px; }
.wmax { width: 10px; height: 10px; border: 1px solid #8a8a8a; margin-right: 36px; box-shadow: 2px -2px 0 -1px #fff, 2px -2px 0 0 #8a8a8a; }
.wclose { width: 11px; height: 11px; margin-right: 20px; }

/* menu */
.menubar { height: 29px; background: #f8f8f8; display: flex; align-items: center; flex: none; position: relative; padding-left: 7px; white-space: nowrap; }
.menus { display: flex; gap: 10.200px; width: 778px; }
.tool-new { margin-left: 3px; }
.tool-gxe { margin-left: 7px; }
.news { margin-left: 7px; width: 187px; height: 29px; background: #fff; color: #2d7d10; line-height: 29px; padding-left: 29px; }
.acct { margin-left: 6px; display: flex; align-items: center; gap: 5px; }
.phone { letter-spacing: .4px; }
.acct .caret { margin: 0 3px; }
.beans { margin-right: 5px; }
.bell { width: 12px; height: 18px; }
.more { font-size: 13px; font-weight: bold; line-height: 12px; }
.more-end { position: absolute; right: 2px; top: 6px; }

/* tool rows */
.toolrow { display: flex; flex: none; position: relative; }
.grp { display: flex; align-items: center; background: linear-gradient(#fbfbfb, #f5f5f5); border-radius: 3px; position: relative; height: 100%; white-space: nowrap; }
.grp > .tool { margin-right: 7px; }
.grp > .m3 { margin-right: 3px; }
.grp > .m4 { margin-right: 4px; }
.grp > .m5 { margin-right: 5px; }
.grp > .m6 { margin-right: 6px; }
.grp > .m7 { margin-right: 7px; }
.grp > .m8 { margin-right: 8px; }
.grp > .m9 { margin-right: 9px; }
.grp > .m10 { margin-right: 10px; }
.r1 { height: 27px; margin: 1px 0 3px; }
.r2 { height: 26px; margin-bottom: 1px; padding-left: 2px; }
.r3 { height: 28px; margin-bottom: 1px; padding-left: 2px; }
.r4 { height: 27px; margin-bottom: 1px; padding-left: 2px; }
.r5 { height: 27px; margin-top: 1px; padding-left: 2px; }
.ic { width: 15px; height: 15px; }
.tool { display: inline-flex; align-items: center; gap: 4px; height: 22px; flex: none; }
.tool .caret { margin-left: 2px; }
.off { color: #a0a0a0; }
.active { background: #d5e7f7; border: 1px solid #0f7ad8; padding: 0 3px; }
.sep { width: 1px; height: 18px; background: #c4c4c4; flex: none; }
.caret { width: 0; height: 0; border: 3px solid transparent; border-top: 4px solid #222; border-bottom: 0; flex: none; }
.caret-off { border-top-color: #999; }
.grip { width: 3px; height: 15px; background: radial-gradient(circle, #9a9a9a 1px, transparent 1.200px) 0 0/3px 4px; margin-left: 2px; flex: none; }
.sigma { font-weight: bold; font-size: 14px; width: 14px; text-align: center; font-family: "DejaVu Serif", serif; }

.g11 { width: 150px; padding-left: 5px; margin-right: 3px; }
.g11 .ic-first { margin-right: 9px; }
.g11 > .caret { margin: 0 8px 0 6px; }
.g11 .sep { margin: 0 8px 0 5px; }
.g11 .more { margin-left: 13px; }
.g12 { width: 542px; padding-left: 3px; margin-right: 8px; }
.g12 > .tool { margin-right: 7.500px; }
.g12 .tool:first-child { gap: 7px; }
.g12 .tool { gap: 5px; }
.g13 { flex: 1; padding-left: 2px; }
.g13 .sep { margin-right: 6px; }
.grp > .pill { background: #fff; margin-right: 0; width: 49px; padding-left: 3px; gap: 3px; }
.capbox { width: 13px; height: 22px; background: #efefef; display: flex; align-items: center; justify-content: center; margin-right: 4px; }
.g13 .sep-floor { margin-right: 8px; }
.floor { gap: 2px; }

.g21 { width: 789px; padding-left: 1px; }
.g21 .grip { margin-right: 3px; }
.g21 > .tool { margin-right: 8px; }
.g21 > .m5 { margin-right: 5px; }
.g21 > .m6 { margin-right: 6px; }
.g21 > .m7 { margin-right: 7px; }
.g21 .sep { margin-right: 6px; }
.g21 .tool .caret { margin-left: 0; }

.g31 { width: 565px; margin-right: 74px; }
.g31 .grip { margin-right: 2px; }
.sel { display: flex; align-items: center; height: 24px; background: #fff; padding-left: 2px; position: relative; margin-right: 2px; flex: none; }
.sel span { flex: 1; }
.capbox2 { width: 13px; height: 24px; background: #f6f6f6; display: flex; align-items: center; justify-content: center; }
.s1 { width: 58px; }
.s2 { width: 70px; }
.s3 { width: 70px; }
.s4 { width: 69px; }
.s5 { width: 55px; margin-left: -2px; margin-right: 6px; justify-content: flex-end; padding: 0; }
.sep3 { margin: 0 6px 0 3px; }
.g31 .active { width: 76px; height: 24px; }
.g32 { width: 422px; }
.g32 .grip { margin: 0 6px 0 2px; }
.g32 > .tool { margin-right: 8px; }

.g41 { width: 1156px; margin-right: 5px; }
.g41 .grip { margin-right: 4px; }
.g41 .sep { margin-right: 7px; }
.grp > .a2 { height: 22px; gap: 3px; padding: 0 3px; margin-left: -2px; margin-right: 3px; }
.g42 { flex: 1; }

/* workspace */
.workspace { height: 624px; display: flex; flex: none; }
.nav { width: 165px; margin-right: 5px; display: flex; flex-direction: column; flex: none; }
.navhead { height: 16px; border: 1px solid #9a9a9a; display: flex; align-items: center; font-size: 13px; padding-left: 1px; position: relative; }
.pin { width: 9px; height: 11px; margin-left: auto; }
.navx { margin: 0 6px 0 11px; font-size: 13px; color: #333; }
.navbtn { height: 22px; border: 1px solid #a8a8a8; background: linear-gradient(#fbfbfb, #efefef); text-align: center; line-height: 21px; font-size: 13px; margin-bottom: 1px; flex: none; }
.nb2 { margin: 1px 0 1px; }
.nb3 { margin-bottom: 0; height: 21px; line-height: 20px; }
.navframe { width: 165px; height: 513px; border: 1px solid #a0a0a0; padding: 1px; background: #f0f0f0; display: flex; flex-direction: column; flex: none; }
.treetools { height: 22px; background: #fff; display: flex; align-items: center; gap: 4px; padding-left: 4px; flex: none; }
.tt { width: 18px; height: 18px; }
.treebody { display: flex; height: 470px; flex: none; }
.tree { width: 144px; padding-top: 5px; background: #fff; overflow: hidden; position: relative; flex: none; }
.leaf, .node { height: 16px; display: flex; align-items: center; position: relative; white-space: nowrap; font-size: 12px; }
.leaf { padding-left: 43px; }
.leaf .li { width: 15px; height: 15px; }
.leaf > span { margin-left: 6px; }
.leaf.sel { background: none; }
.leaf.sel::after { content: ""; position: absolute; left: 41px; width: 93px; top: 0; height: 16px; background: #d6d6d6; z-index: 0; }
.leaf.sel > * { position: relative; z-index: 1; }
.leaf::before { content: ""; position: absolute; left: 32px; top: -8px; height: 16px; width: 10px; border-left: 1px dotted #777; border-bottom: 1px dotted #777; }
.node { padding-left: 24px; }
.node .fo { width: 16px; height: 16px; }
.node > span { margin-left: 5px; }
.node::before { content: ""; position: absolute; left: 14px; width: 8px; top: 8px; border-bottom: 1px dotted #777; }
.chev { position: absolute; left: 10px; top: 4px; width: 6px; height: 6px; border: solid #444; border-width: 0 1.500px 1.500px 0; transform: rotate(45deg); }
.tree::before { content: ""; position: absolute; left: 14px; top: 0; bottom: 0; border-left: 1px dotted #777; }
.xi { width: 13px; height: 14px; margin-left: 1px; }
.k { font-family: "Liberation Mono", monospace; font-size: 10px; }
.vscroll { width: 15px; background: #f0f0f0; display: flex; flex-direction: column; flex: none; }
.vtrack { flex: 1; position: relative; }
.vthumb { height: 227px; background: #cdcdcd; margin: 203px 0 0 0; }
.sa { display: block; width: 15px; height: 15px; flex: none; position: relative; }
.sa::after { content: ""; position: absolute; left: 4px; top: 5px; width: 6px; height: 6px; border: solid #555; border-width: 2px 0 0 2px; }
.sa-up::after { transform: rotate(45deg); top: 6px; }
.sa-dn::after { transform: rotate(225deg); top: 2px; }
.sa-l::after { transform: rotate(-45deg); left: 5px; top: 4px; }
.sa-r::after { transform: rotate(135deg); left: 2px; top: 4px; }
.hscroll { height: 16px; display: flex; align-items: center; background: #f0f0f0; padding-left: 3px; padding-right: 0; margin-top: 1px; flex: none; }
.htrack { width: 108px; height: 15px; }
.hthumb { width: 102px; height: 15px; margin-left: 1px; background: #cdcdcd; }

/* main */
.main { flex: 1; display: flex; flex-direction: column; min-width: 0; }
.canvas { height: 305px; flex: none; }
.cad { width: 1196px; height: 305px; }
.axis { fill: #c4c4c4; font: 15px "Liberation Sans", sans-serif; text-anchor: middle; }
.ax2 { fill: #e0e0e0; }
.g51 { width: 209px; margin-right: 1px; }
.g51 .grip { margin-right: 4px; }
.g51 > .tool { margin-right: 4px; gap: 5px; }
.g51 > .active { width: 75px; padding: 0 3px; margin-right: 3px; height: 23px; gap: 4px; }
.g52 { width: 264px; margin-right: 1px; }
.g52 .grip { margin-right: 5px; }
.g52 > .tool { margin-right: 4px; gap: 5px; }
.g52 > .ab { width: 51px; margin: 0; padding: 0 3px; height: 23px; gap: 4px; }
.g52 > .ab + .ab { margin-right: 4px; }
.g52 > .vt { margin-right: 7px; gap: 4px; }
.g53 { flex: 1; gap: 3px; }

.gridwrap { display: flex; height: 200px; margin-top: 3px; flex: none; }
.strip { width: 12px; flex: none; position: relative; }
.stripx { display: block; width: 11px; height: 11px; margin-top: 4px; border: 1px solid #888; text-align: center; line-height: 9px; font-size: 12px; font-weight: bold; color: #a33; background: #eee; }
.gripv { width: 8px; height: 170px; margin: 3px 0 0 2px; background: radial-gradient(circle, #c4c4c4 1px, transparent 1.200px) 0 0/4px 4px; }
.gridmain { flex: 1; display: flex; flex-direction: column; min-width: 0; }
.gridbar { height: 25px; margin-left: 2px; margin-top: 1px; margin-right: 2px; background: linear-gradient(90deg, #f8f8f8, #f8f8f8 80%, #f2f2f2); display: flex; align-items: center; padding-left: 3px; gap: 10px; white-space: nowrap; flex: none; overflow: hidden; }
.gridbar > .ic { width: 13px; height: 13px; }
.gridbar .tool .ic { width: 15px; height: 15px; }
.gridbar .sp1 { margin-right: -3px; }
.gridbar .sp2 { margin-left: -2px; margin-right: -5px; }
.gridbar .tool { margin-right: -2px; }
.tablebox { height: 155px; margin-top: 2px; border: 1px solid #bbb; background: #fff; margin-right: 1px; overflow: hidden; flex: none; }
.rebar { border-collapse: collapse; table-layout: fixed; width: 1181px; }
.c34 { width: 34px; } .c73 { width: 73px; } .c56 { width: 56px; } .c35 { width: 35px; } .c201 { width: 201px; } .c166 { width: 166px; } .c155 { width: 155px; } .c82 { width: 82px; } .c60 { width: 60px; } .c38 { width: 38px; } .c40 { width: 40px; } .c48 { width: 48px; } .c61 { width: 61px; } .c36 { width: 36px; }
.rebar th { height: 20px; padding: 2px 0 0; font-weight: normal; background: linear-gradient(#f9f9f9, #f0f0f0); border: 1px solid #c0c0c0; border-top: 0; overflow: hidden; white-space: nowrap; }
.rebar td { height: 19px; padding: 0; border: 1px solid #c0c0c0; }
.rebar .hot { background: linear-gradient(#fbdf9f, #f4c46c); color: #5d0f5d; }
.rebar .clip { text-align: left; padding-left: 11px; }
.rowhead { background: #ffd68a; color: #5d0f5d; font-family: "Liberation Mono", monospace; text-align: center; }
.rebar .cur { background: #d4e6f7; border-right: 1px solid #000; }
.gscroll { height: 15px; margin-right: 1px; background: #f0f0f0; display: flex; align-items: center; padding-left: 4px; flex: none; }
.gthumb { width: 760px; height: 15px; background: #cdcdcd; }

/* status */
.status { height: 20px; display: flex; flex: none; gap: 2px; padding-bottom: 1px; }
.cell { background: linear-gradient(#fdfdfd, #f4f4f4); border: 1px solid #dcdcdc; line-height: 18px; padding-left: 1px; white-space: nowrap; overflow: hidden; }
.c1 { width: 148px; }
.c2 { width: 78px; }
.c3 { width: 98px; }
.c4 { width: 48px; }
.c5 { width: 914px; }
.c6 { flex: 1; }

/* taskbar */
.taskbar { height: 40px; background: #05101a; display: flex; color: #eee; flex: none; }
.start { width: 48px; background: #000; display: flex; align-items: center; justify-content: center; flex: none; }
.winlogo { width: 18px; height: 18px; }
.search { width: 344px; background: #333; display: flex; align-items: center; padding-left: 9px; flex: none; }
.cortana { width: 20px; height: 20px; border: 2.500px solid #e8e8e8; border-radius: 50%; flex: none; }
.hint { color: #8c8c8c; font-size: 14px; margin-left: 7px; }
.smic { width: 14px; height: 18px; margin-left: 113px; }
.tasks { display: grid; grid-template-columns: 49px 51px 52px 52px 46px 44px 46px 44px 46px 44px 44px; flex: none; }
.slot { display: flex; align-items: center; justify-content: center; position: relative; }
.slot.run::after { content: ""; position: absolute; left: 3px; right: 3px; bottom: 0; height: 2px; background: #76b9ed; }
.slot.cur { background: #2b333a; }
.slot.cur::after { left: 0; right: 0; }
.tv { width: 20px; height: 16px; }
.ti { width: 23px; height: 23px; }
.ti2 { width: 26px; height: 26px; }
.tray { flex: 1; display: grid; grid-template-columns: 50px 64px 36px 42px 26px 50px 28px 32px 76px 1fr; align-items: center; justify-items: center; }
.tlink { color: #ccc; }
.cpu, .clock { display: flex; flex-direction: column; align-items: center; line-height: 18px; }
.clock { font-size: 12.500px; }
.tup { width: 12px; height: 7px; }
.tbat { width: 18px; height: 16px; justify-self: end; margin-right: 3px; }
.twifi { width: 14px; height: 14px; }
.tkbd { width: 22px; height: 16px; justify-self: end; margin-right: 2px; }
.tzh { font-size: 14px; }
.tsg { width: 18px; height: 18px; }
.tnote { width: 16px; height: 18px; justify-self: start; margin-left: 10px; }

/* overlays */
.imebar { position: absolute; left: 884px; top: 0; display: flex; align-items: center; }
.imelogo { width: 28px; height: 28px; }
.imetools { width: 178px; height: 22px; margin-top: -4px; background: #fbfdff; border: 1px solid #b8d0e4; display: flex; align-items: center; padding-left: 12px; }
.imeying { color: #2176c0; font-weight: bold; font-size: 13px; margin-right: 7px; }
.imepunc { color: #2176c0; font-weight: bold; margin-right: 12px; width: 9px; }
.im { width: 16px; height: 16px; margin-right: 6px; }
.toptab { position: absolute; left: 1010px; top: 0; width: 44px; height: 3px; background: #46c060; border: 1px solid #aaa; border-top: 0; }
.redbox { position: absolute; left: 702px; top: 118px; width: 135px; height: 63px; border: 7px solid #f00; }
.dialog { position: absolute; left: 673px; top: 182px; width: 470px; height: 385px; background: #f0f0f0; border: 1px solid #3c9bf0; box-shadow: 0 0 14px rgba(0,0,0,.4); display: flex; flex-direction: column; }
.dlghead { height: 25px; background: #fff; display: flex; align-items: center; padding-left: 3px; font-size: 12px; color: #222; flex: none; }
.dlgx { width: 11px; height: 11px; margin-left: auto; margin-right: 9px; }
.dlgart { width: 464px; height: 313px; background: #000; margin: 2px 0 0 2px; flex: none; box-shadow: 0 0 0 1px #c8c8c8; }
.gval { fill: #0d0; font: 26px "Liberation Serif", serif; }
.unit { fill: #fff; font: 17px "Liberation Serif", serif; }
.note { fill: #f4f4f4; font: 300 26px "Liberation Serif", "Noto Sans CJK SC", sans-serif; }
.dlgfoot { display: flex; justify-content: flex-end; gap: 8px; padding: 11px 12px 0 0; }
.btn { width: 72px; height: 23px; background: #e1e1e1; border: 1px solid #adadad; font: 12px "Liberation Sans", "Noto Sans CJK SC", sans-serif; color: #111; padding: 0; }
```
